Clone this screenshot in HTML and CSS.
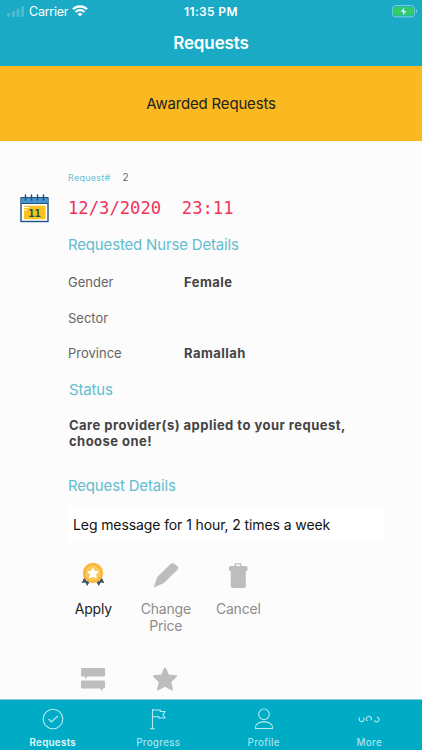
FILE: index.html
```
<!DOCTYPE html>
<html lang="en">
<head>
<meta charset="utf-8">
<title>Requests</title>
<link rel="stylesheet" href="styles.css">
</head>
<body>
<div class="app">
  <header class="header">
    <div class="statusbar">
      <div class="carrier">
        <svg width="18" height="11" viewBox="0 0 18 11" fill="#4bbcd2"><rect x="0" y="7" width="3" height="4" rx="1"/><rect x="5" y="5" width="3" height="6" rx="1"/><rect x="9.500" y="2.500" width="3" height="8.500" rx="1"/><rect x="14" y="0" width="3" height="11" rx="1"/></svg>
        <span class="carrier-name">Carrier</span>
        <svg width="16" height="12" viewBox="0 0 16 12" fill="none" stroke="#fff" stroke-width="2.200"><path d="M1 4.300a10 10 0 0 1 14 0M3.600 7a6.300 6.300 0 0 1 8.800 0"/><path d="M8 11.500 5.500 9.100a3.600 3.600 0 0 1 5 0z" fill="#fff" stroke="none"/></svg>
      </div>
      <span class="clock">11:35 PM</span>
      <svg class="battery" width="26" height="13" viewBox="0 0 26 13"><rect x=".6" y=".6" width="21.800" height="11.300" rx="3" fill="none" stroke="#83d0df"/><rect x="2" y="2" width="19" height="8.500" rx="1.700" fill="#30cf62"/><path d="M24 4.300v4c1.500-.6 1.500-3.400 0-4z" fill="#83d0df"/><path d="M12.700 1.600 8.400 7h2.800l-.8 4.200L14.800 5.700h-2.900z" fill="#fff" stroke="#1baac5" stroke-width=".5"/></svg>
    </div>
    <h1 class="title">Requests</h1>
  </header>
  <div class="banner"><span>Awarded Requests</span></div>
  <main class="content">
    <div class="side">
      <svg width="29" height="29" viewBox="0 0 29 29"><rect x="1" y="4" width="27" height="23.500" fill="#fff" stroke="#214f80" stroke-width="1.400"/><rect x="1.700" y="3.500" width="25.600" height="5.800" fill="#4594cd"/><path d="M1 9.500h27M1 3.500h27" stroke="#214f80" stroke-width="1.200"/><path d="M5.500 1v5M11.500 1v5M17.500 1v5M23.500 1v5" stroke="#214f80" stroke-width="1.500" stroke-linecap="round"/><rect x="4" y="11.700" width="21.500" height="13.500" fill="#fcc21b"/><path d="M3 13.500h6M3 16h4" stroke="#fff"/><text x="14.500" y="22.700" text-anchor="middle" class="cal-day">11</text></svg>
    </div>
    <div class="details">
      <div class="number"><span class="number-label">Request#</span><span class="number-value">2</span></div>
      <div class="date"><span>12/3/2020&nbsp; 23:11</span></div>
      <h2 class="heading nurse"><span>Requested Nurse Details</span></h2>
      <div class="field gender"><span>Gender</span><b>Female</b></div>
      <div class="field sector"><span>Sector</span></div>
      <div class="field province"><span>Province</span><b>Ramallah</b></div>
      <h2 class="heading status"><span>Status</span></h2>
      <p class="message">Care provider(s) applied to your request,<br>choose one!</p>
      <h2 class="heading request"><span>Request Details</span></h2>
      <div class="note"><span>Leg message for 1 hour, 2 times a week</span></div>
      <div class="actions">
        <div class="action active">
          <svg width="30" height="30" viewBox="0 0 30 30"><path d="m7.500 15-3.800 8 3.700-.5 1.800 3.500 4-7zM22.500 15l3.800 8-3.700-.5-1.800 3.500-4-7z" fill="#35506a"/><circle cx="15" cy="13" r="10.200" fill="#f8b83d"/><circle cx="15" cy="13" r="7.500" fill="#ffcd67" opacity=".75"/><path d="m15 8.200 1.600 3.100 3.500.5-2.500 2.500.6 3.500-3.200-1.600-3.200 1.600.6-3.500-2.500-2.500 3.500-.5z" fill="#fff" stroke="#fff" stroke-linejoin="round"/></svg>
          <span>Apply</span>
        </div>
        <div class="action">
          <svg width="30" height="30" viewBox="0 0 30 30" fill="#bdbdbd"><path d="M2.800 27.500 6.200 17 19.600 4q1.500-1.400 3.300-.5l3.500 2.800q1.500 1.700.1 3.400L13 23z"/></svg>
          <span>Change<br>Price</span>
        </div>
        <div class="action">
          <svg width="30" height="30" viewBox="0 0 30 30" fill="#bdbdbd"><path d="M6 7.500Q6 6 7.500 6h4V4.500q0-1.300 1.300-1.300h4.400q1.300 0 1.300 1.300V6h4.500q1.500 0 1.500 1.500v3.200h-1.700V26q0 2-2 2H9.700q-2 0-2-2V10.700H6zM13 6h4V4.500h-4z" fill-rule="evenodd"/></svg>
          <span>Cancel</span>
        </div>
        <div class="action">
          <svg width="30" height="30" viewBox="0 0 30 30" fill="#bdbdbd"><path d="M4 4h22q1 0 1 1v6.500q0 1-1 1H9.500L7 15.300v-2.800H4q-1 0-1-1V5q0-1 1-1zM4 16.500h22q1 0 1 1v6q0 1-1 1h-1.500v3L22 24.500H4q-1 0-1-1v-6q0-1 1-1z"/></svg>
        </div>
        <div class="action">
          <svg width="30" height="30" viewBox="0 0 30 30" fill="#bdbdbd" stroke="#bdbdbd" stroke-width="2" stroke-linejoin="round"><path d="m14 4.500 3.200 7 7.800.8-5.700 5.300 1.600 7.900-6.900-3.900-6.900 3.900 1.600-7.900L3 12.300l7.800-.8z"/></svg>
        </div>
      </div>
    </div>
  </main>
  <nav class="tabs">
    <div class="tab selected"><svg width="22" height="22" viewBox="0 0 22 22"><circle cx="11" cy="11" r="9.800"/><path d="m6.500 11 3 3 6.300-6"/></svg><span>Requests</span></div>
    <div class="tab"><svg width="22" height="22" viewBox="0 0 22 22"><path d="M5.500 1v20M3 20.700h5M5.500 2h7.800v1.500H18l-2 3.300 2 3.200h-6V8.700H5.500"/></svg><span>Progress</span></div>
    <div class="tab"><svg width="22" height="22" viewBox="0 0 22 22"><circle cx="11" cy="6.300" r="5.300"/><path d="M2.500 20.500v-1.200c0-7.300 17-7.300 17 0v1.200z"/></svg><span>Profile</span></div>
    <div class="tab"><svg width="22" height="22" viewBox="0 0 22 22"><path d="M1.800 9.500a2.400 2.400 0 1 0 3.600 0M13 12.200A2.500 2.500 0 1 0 9.500 13M16.500 12.200a2.400 2.400 0 1 0 2.400-3.200"/></svg><span>More</span></div>
  </nav>
</div>
</body>
</html>
```
FILE: styles.css
```
* { box-sizing: border-box; }
body { margin: 0; font-family: Inter, sans-serif; background: #fcfcfc; }
svg { display: block; flex: none; }
h1, h2, p { margin: 0; font-weight: 400; }
.app { width: 422px; height: 750px; display: flex; flex-direction: column; overflow: hidden; }
.header { height: 66px; flex: none; background: #1baac5; color: #fff; }
.statusbar { height: 22px; padding: 0 4px 0 7px; display: grid; grid-template-columns: 1fr auto 1fr; align-items: center; }
.carrier { display: flex; align-items: center; gap: 4px; font-size: 12.500px; }
.carrier-name { letter-spacing: -.25px; }
.clock { font-size: 12px; font-weight: 600; letter-spacing: .35px; margin-left: -3px; }
.battery { justify-self: end; }
.title { line-height: 42px; text-align: center; font-size: 17px; font-weight: 600; letter-spacing: -.1px; }
.banner { height: 75px; flex: none; background: #fab920; color: #222; display: flex; align-items: center; justify-content: center; font-size: 15px; letter-spacing: -.18px; }
.content { flex: 1; min-height: 0; overflow: hidden; display: flex; }
.side { width: 68px; flex: none; padding: 53px 0 0 20px; }
.cal-day { font: bold 10.500px "DejaVu Sans Mono", monospace; fill: #214f55; }
.details { flex: none; width: 316px; padding-top: 26px; }
.number { height: 21px; padding-bottom: 1px; display: flex; align-items: center; gap: 12px; color: #666; font-size: 10px; }
.number-label { color: #6bc1d1; font-size: 9px; letter-spacing: .25px; }
.date { height: 40px; display: flex; align-items: center; font: 17.200px "DejaVu Sans Mono", monospace; color: #f03459; white-space: pre; }
.heading { padding-bottom: 2px; display: flex; align-items: center; font-size: 15px; letter-spacing: -.17px; color: #62bdcf; }
.nurse { height: 34px; }
.field { display: grid; grid-template-columns: 116px 1fr; align-items: center; font-size: 13px; color: #646464; }
.field b { color: #444; letter-spacing: .47px; }
.gender { height: 40px; padding-bottom: 1px; }
.sector { height: 32px; }
.province { height: 38px; padding-bottom: 1px; }
.status { height: 36px; padding-left: 1px; }
.message { margin: 10px 0 21px; padding-left: 1px; font-size: 13px; line-height: 15.500px; letter-spacing: .47px; font-weight: 700; color: #444; white-space: nowrap; }
.request { height: 32px; }
.note { margin-top: 6px; height: 34px; padding: 0 0 1px 5px; display: flex; align-items: center; background: #fff; color: #111; font-size: 14px; letter-spacing: -.1px; white-space: nowrap; }
.actions { margin-top: 18px; margin-left: -11px; display: grid; grid-template-columns: repeat(3, 72.500px); grid-auto-rows: 104px; }
.action { display: flex; flex-direction: column; align-items: center; gap: 10px; font-size: 14px; letter-spacing: -.2px; line-height: 17px; text-align: center; color: #8c8c8c; }
.active { color: #222; }
.tabs { height: 51px; flex: none; border-top: 1px solid #86cfdb; background: #00abc5; display: grid; grid-template-columns: repeat(4, 1fr); }
.tab { display: flex; flex-direction: column; align-items: center; padding-top: 8px; gap: 6px; font-size: 9.800px; line-height: 13px; letter-spacing: .3px; font-weight: 500; color: #a5e3ec; }
.tab svg { fill: none; stroke: #b5eaf1; stroke-width: 1.100; }
.selected { color: #e6f9fb; font-weight: 600; }
```
